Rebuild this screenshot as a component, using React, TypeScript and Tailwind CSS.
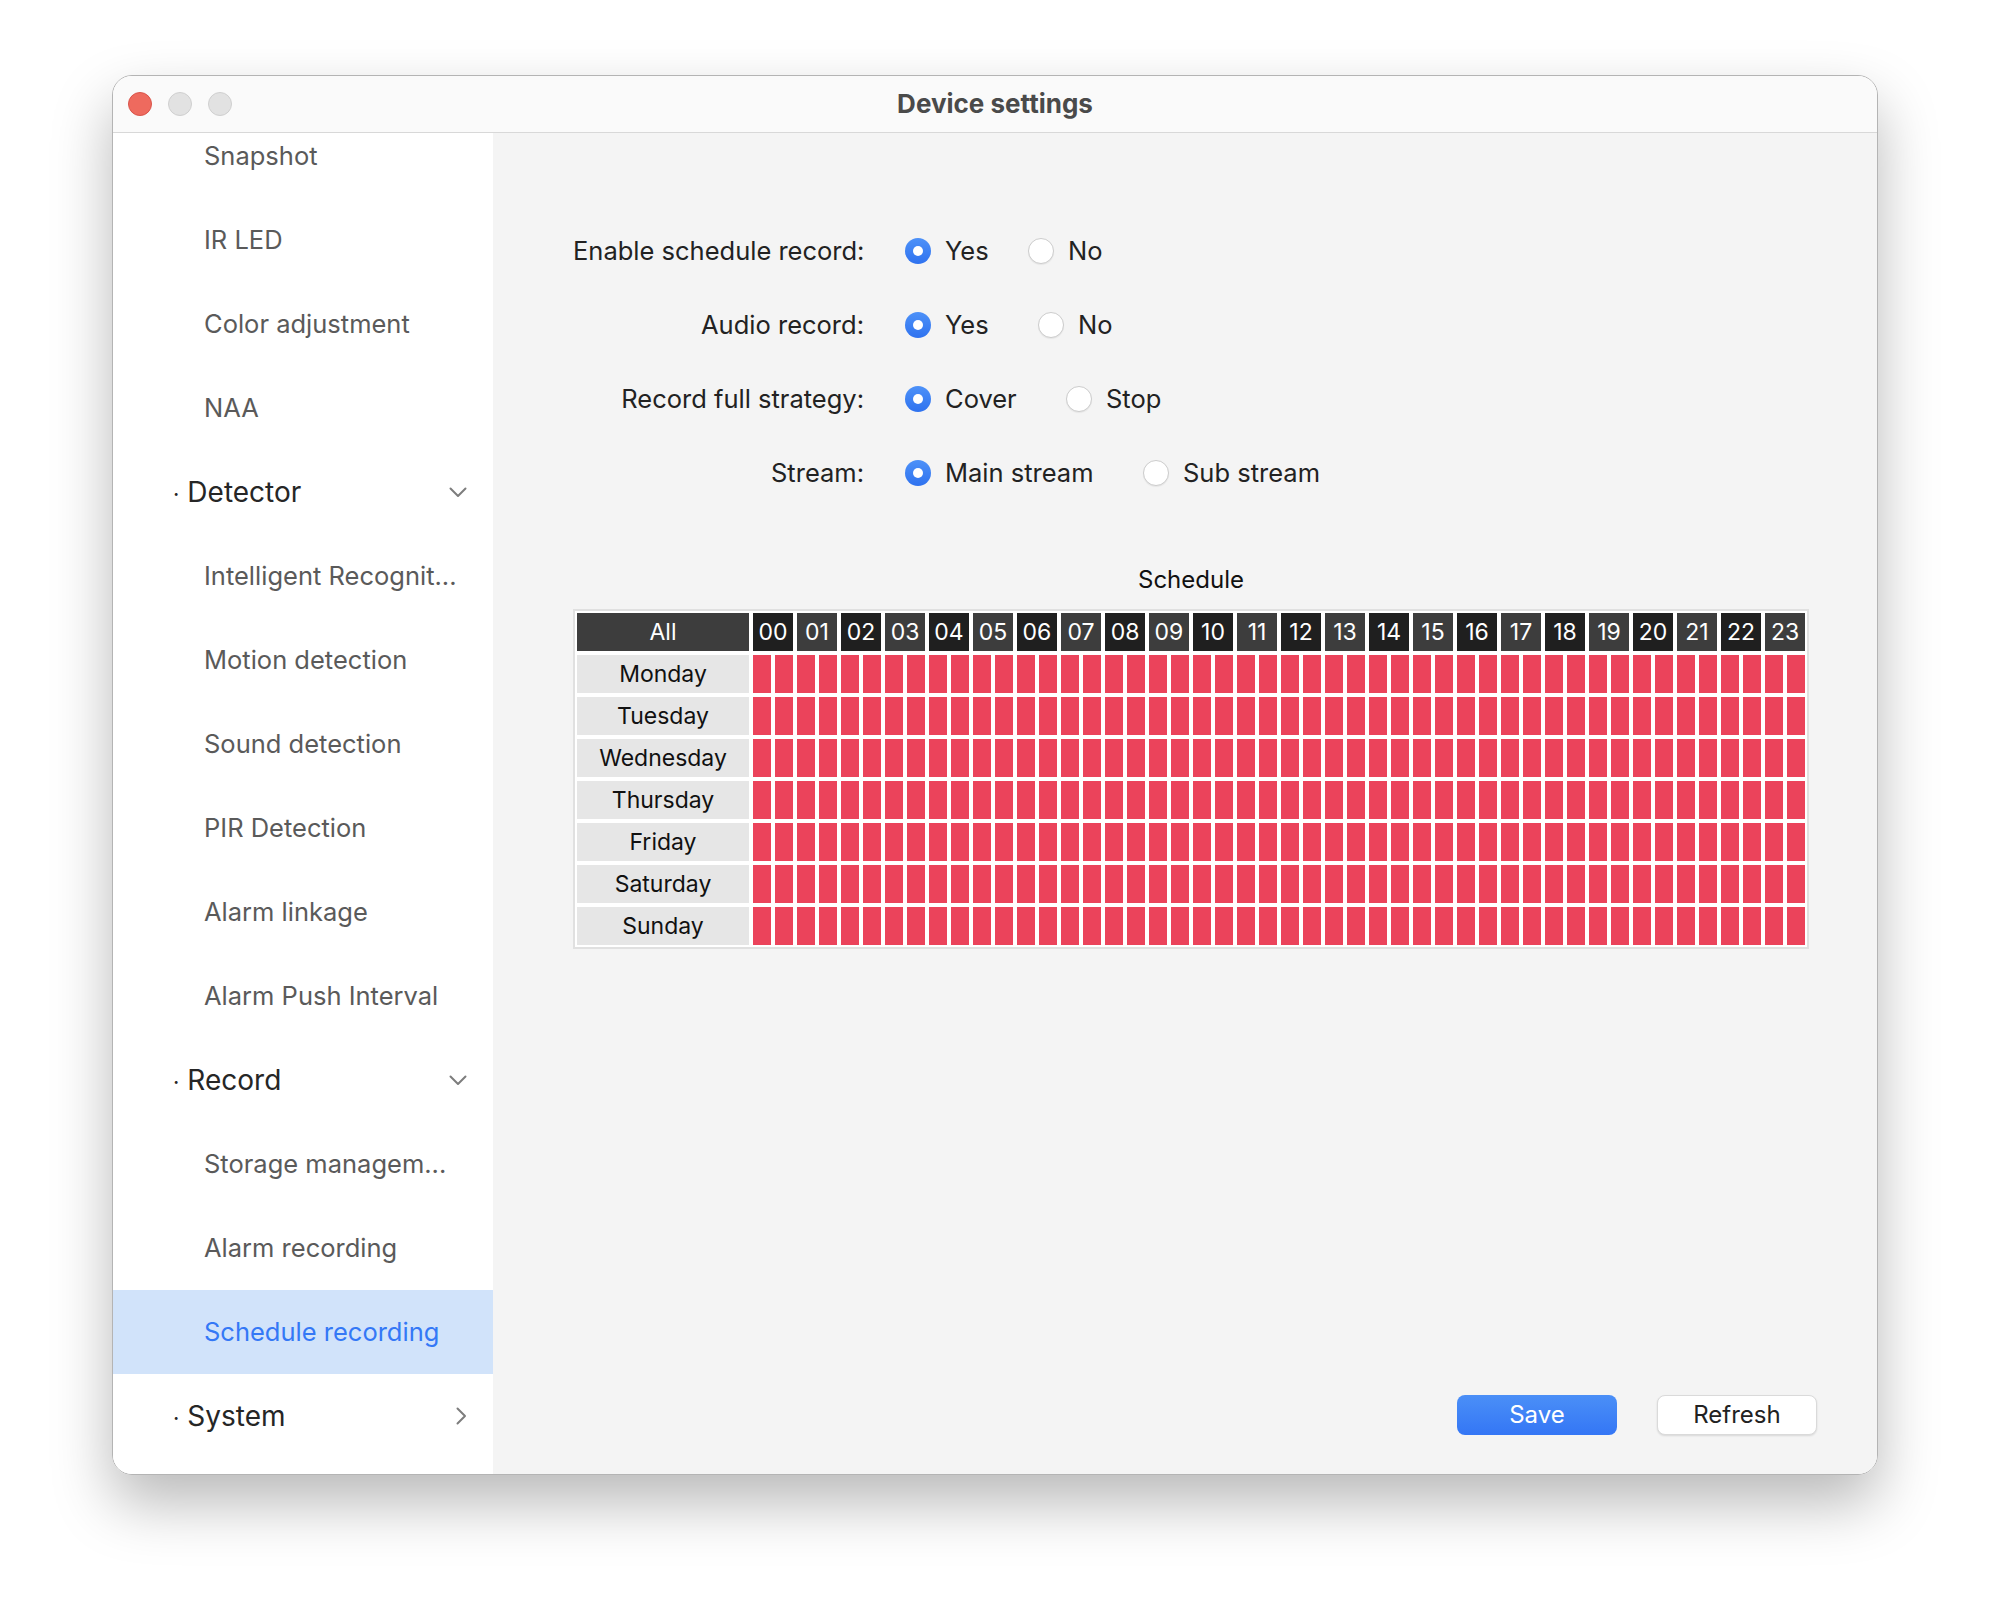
import React from 'react';

type NavItem = {
  label: string;
  kind: 'child' | 'group';
  chevron?: 'down' | 'right';
  active?: boolean;
};

const navItems: NavItem[] = [
  { label: 'Snapshot', kind: 'child' },
  { label: 'IR LED', kind: 'child' },
  { label: 'Color adjustment', kind: 'child' },
  { label: 'NAA', kind: 'child' },
  { label: 'Detector', kind: 'group', chevron: 'down' },
  { label: 'Intelligent Recognit...', kind: 'child' },
  { label: 'Motion detection', kind: 'child' },
  { label: 'Sound detection', kind: 'child' },
  { label: 'PIR Detection', kind: 'child' },
  { label: 'Alarm linkage', kind: 'child' },
  { label: 'Alarm Push Interval', kind: 'child' },
  { label: 'Record', kind: 'group', chevron: 'down' },
  { label: 'Storage managem...', kind: 'child' },
  { label: 'Alarm recording', kind: 'child' },
  { label: 'Schedule recording', kind: 'child', active: true },
  { label: 'System', kind: 'group', chevron: 'right' },
];

// first option box width keeps the second radio where the reference has it
const formRows = [
  { label: 'Enable schedule record:', options: ['Yes', 'No'], firstWidth: 'w-[123px]' },
  { label: 'Audio record:', options: ['Yes', 'No'], firstWidth: 'w-[133px]' },
  { label: 'Record full strategy:', options: ['Cover', 'Stop'], firstWidth: 'w-[161px]' },
  { label: 'Stream:', options: ['Main stream', 'Sub stream'], firstWidth: 'w-[238px]' },
];

const hours = Array.from({ length: 24 }, (_, i) => i.toString().padStart(2, '0'));
const days = ['Monday', 'Tuesday', 'Wednesday', 'Thursday', 'Friday', 'Saturday', 'Sunday'];
const slots = Array.from({ length: 48 }, (_, i) => i);

const Chevron = ({ dir }: { dir: 'down' | 'right' }) =>
  dir === 'down' ? (
    <svg width="18" height="11" viewBox="0 0 18 11" fill="none">
      <polyline points="1.5,1.5 9,9 16.5,1.5" stroke="#7d7d7d" strokeWidth="2" strokeLinecap="round" strokeLinejoin="round" />
    </svg>
  ) : (
    <svg width="11" height="18" viewBox="0 0 11 18" fill="none">
      <polyline points="1.5,1.5 9,9 1.5,16.5" stroke="#7d7d7d" strokeWidth="2" strokeLinecap="round" strokeLinejoin="round" />
    </svg>
  );

const Radio = ({ checked }: { checked: boolean }) =>
  checked ? (
    <span className="flex h-[26px] w-[26px] shrink-0 items-center justify-center rounded-full bg-linear-to-b from-[#4d91f8] to-[#2f72ef]">
      <span className="h-[10px] w-[10px] rounded-full bg-white" />
    </span>
  ) : (
    <span className="h-[26px] w-[26px] shrink-0 rounded-full border border-[#cccccc] bg-white shadow-[0_1px_1px_rgba(0,0,0,0.06)]" />
  );

export default function App() {
  return (
    <div className="min-h-[1624px] w-[1990px] bg-white pl-[112px] pt-[75px] font-['Inter',sans-serif]">
      <div className="flex h-[1400px] w-[1766px] flex-col overflow-hidden rounded-[20px] border border-[#b4b4b4] shadow-[0_28px_60px_rgba(0,0,0,0.28)]">
        {/* title bar */}
        <div className="grid h-[57px] shrink-0 grid-cols-[1fr_auto_1fr] items-center border-b border-[#d8d8d8] bg-[#fafafa]">
          <div className="flex gap-[16px] pl-[15px]">
            <span className="h-[24px] w-[24px] rounded-full border border-[#d9544a] bg-[#ee6a5e]" />
            <span className="h-[24px] w-[24px] rounded-full border border-[#cfcfcf] bg-[#e2e2e2]" />
            <span className="h-[24px] w-[24px] rounded-full border border-[#cfcfcf] bg-[#e2e2e2]" />
          </div>
          <div className="pb-[2px] text-[26px] font-bold text-[#4a4a4a]">Device settings</div>
          <div />
        </div>

        <div className="flex min-h-0 flex-1">
          {/* sidebar */}
          <aside className="w-[380px] shrink-0 overflow-hidden bg-white">
            <div className="mt-[-19px] flex flex-col">
              {navItems.map((item) =>
                item.kind === 'group' ? (
                  <div key={item.label} className="flex h-[84px] items-center justify-between pl-[60px] pr-[26px] text-[28px] text-[#262626]">
                    <span>
                      <span className="mr-[8px] text-[22px]">·</span>
                      {item.label}
                    </span>
                    {item.chevron && <Chevron dir={item.chevron} />}
                  </div>
                ) : (
                  <div
                    key={item.label}
                    className={
                      item.active
                        ? 'flex h-[84px] items-center bg-[#d1e3fa] pl-[91px] text-[25.5px] text-[#3478f6]'
                        : 'flex h-[84px] items-center pl-[91px] text-[25.5px] text-[#5a5a5a]'
                    }
                  >
                    {item.label}
                  </div>
                )
              )}
            </div>
          </aside>

          {/* main */}
          <main className="flex flex-1 flex-col bg-[#f4f4f4]">
            <div className="flex flex-col gap-[34px] pl-[80px] pt-[98px]">
              {formRows.map((row) => (
                <div key={row.label} className="flex h-[40px] items-center text-[25.5px] text-[#222]">
                  <div className="w-[291px] whitespace-nowrap text-right">{row.label}</div>
                  <div className="ml-[41px] flex items-center">
                    <label className={`flex items-center gap-[14px] ${row.firstWidth}`}>
                      <Radio checked />
                      <span>{row.options[0]}</span>
                    </label>
                    <label className="flex items-center gap-[14px]">
                      <Radio checked={false} />
                      <span>{row.options[1]}</span>
                    </label>
                  </div>
                </div>
              ))}
            </div>

            <div className="ml-[80px] mt-[72px] flex w-fit flex-col">
              <div className="h-[30px] text-center text-[24px] leading-[30px] text-[#111]">Schedule</div>
              <div className="mt-[14px] flex flex-col gap-[4px] border-2 border-[#e0e0e0] bg-white p-[2px]">
                <div className="flex gap-[4px]">
                  <div className="flex h-[38px] w-[172px] items-center justify-center bg-[#3d3d3d] text-[23px] text-white">All</div>
                  {hours.map((h, i) => (
                    <div
                      key={h}
                      className={
                        i % 2 === 0
                          ? 'flex h-[38px] w-[40px] items-center justify-center bg-[#1f1f1f] text-[23px] text-white'
                          : 'flex h-[38px] w-[40px] items-center justify-center bg-[#3d3d3d] text-[23px] text-white'
                      }
                    >
                      {h}
                    </div>
                  ))}
                </div>
                {days.map((d) => (
                  <div key={d} className="flex gap-[4px]">
                    <div className="flex h-[38px] w-[172px] items-center justify-center bg-[#e6e6e6] text-[23px] text-[#111]">{d}</div>
                    {slots.map((s) => (
                      <div key={s} className="h-[38px] w-[18px] bg-[#eb435b]" />
                    ))}
                  </div>
                ))}
              </div>
            </div>

            <div className="flex-1" />

            <div className="flex justify-end gap-[40px] pb-[39px] pr-[60px]">
              <button className="h-[40px] w-[160px] rounded-[8px] bg-linear-to-b from-[#4b8ff7] to-[#3476f5] text-[24px] text-white">
                Save
              </button>
              <button className="h-[40px] w-[160px] rounded-[8px] border border-[#dadada] bg-white text-[24px] text-[#222] shadow-[0_1px_2px_rgba(0,0,0,0.12)]">
                Refresh
              </button>
            </div>
          </main>
        </div>
      </div>
    </div>
  );
}
